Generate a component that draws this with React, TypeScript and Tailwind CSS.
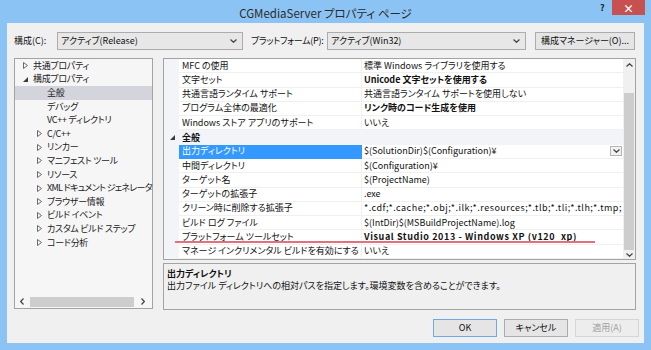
import React from "react";

const TriRight = () => (
  <svg width="5" height="7" viewBox="0 0 5 7">
    <path d="M0.5 0.5 L4.5 3.5 L0.5 6.5 Z" fill="none" stroke="#6a6a6a" strokeWidth="1" />
  </svg>
);
const TriDown = () => (
  <svg width="5" height="5" viewBox="0 0 5 5">
    <path d="M5 0 L5 5 L0 5 Z" fill="#3a3a3a" />
  </svg>
);
const ChevDown = ({ color = "#444" }: { color?: string }) => (
  <svg width="7" height="4" viewBox="0 0 7 4">
    <path d="M0.5 0.5 L3.5 3.3 L6.5 0.5" fill="none" stroke={color} strokeWidth="1.2" />
  </svg>
);
const ChevUp = ({ color = "#444" }: { color?: string }) => (
  <svg width="7" height="4" viewBox="0 0 7 4">
    <path d="M0.5 3.5 L3.5 0.7 L6.5 3.5" fill="none" stroke={color} strokeWidth="1.2" />
  </svg>
);
const ChevLeft = () => (
  <svg width="4" height="7" viewBox="0 0 4 7">
    <path d="M3.5 0.5 L0.7 3.5 L3.5 6.5" fill="none" stroke="#444" strokeWidth="1.2" />
  </svg>
);
const ChevRight = () => (
  <svg width="4" height="7" viewBox="0 0 4 7">
    <path d="M0.5 0.5 L3.3 3.5 L0.5 6.5" fill="none" stroke="#444" strokeWidth="1.2" />
  </svg>
);

type TreeItem = { label: string; level: 1 | 2; icon?: "right" | "down"; selected?: boolean; tight?: boolean };
const tree: TreeItem[] = [
  { label: "共通プロパティ", level: 1, icon: "right" },
  { label: "構成プロパティ", level: 1, icon: "down" },
  { label: "全般", level: 2, selected: true },
  { label: "デバッグ", level: 2 },
  { label: "VC++ ディレクトリ", level: 2 },
  { label: "C/C++", level: 2, icon: "right" },
  { label: "リンカー", level: 2, icon: "right" },
  { label: "マニフェスト ツール", level: 2, icon: "right" },
  { label: "リソース", level: 2, icon: "right" },
  { label: "XML ドキュメント ジェネレータ", level: 2, icon: "right", tight: true },
  { label: "ブラウザー情報", level: 2, icon: "right" },
  { label: "ビルド イベント", level: 2, icon: "right" },
  { label: "カスタム ビルド ステップ", level: 2, icon: "right" },
  { label: "コード分析", level: 2, icon: "right" },
];

type Row = {
  name?: string;
  value?: string;
  bold?: boolean;
  selected?: boolean;
  category?: string;
  wide?: boolean;
};
const rows: Row[] = [
  { name: "MFC の使用", value: "標準 Windows ライブラリを使用する" },
  { name: "文字セット", value: "Unicode 文字セットを使用する", bold: true },
  { name: "共通言語ランタイム サポート", value: "共通言語ランタイム サポートを使用しない" },
  { name: "プログラム全体の最適化", value: "リンク時のコード生成を使用", bold: true },
  { name: "Windows ストア アプリのサポート", value: "いいえ" },
  { category: "全般" },
  { name: "出力ディレクトリ", value: "$(SolutionDir)$(Configuration)¥", selected: true },
  { name: "中間ディレクトリ", value: "$(Configuration)¥" },
  { name: "ターゲット名", value: "$(ProjectName)" },
  { name: "ターゲットの拡張子", value: ".exe" },
  {
    name: "クリーン時に削除する拡張子",
    value: "*.cdf;*.cache;*.obj;*.ilk;*.resources;*.tlb;*.tli;*.tlh;*.tmp;",
    wide: true,
  },
  { name: "ビルド ログ ファイル", value: "$(IntDir)$(MSBuildProjectName).log" },
  {
    name: "プラットフォーム ツールセット",
    value: "Visual Studio 2013 - Windows XP (v120_xp)",
    bold: true,
    wide: true,
  },
  { name: "マネージ インクリメンタル ビルドを有効にする", value: "いいえ" },
];

export default function App() {
  return (
    <div className="relative w-[651px] h-[350px] bg-[#8bc4f4] flex flex-col font-['Noto_Sans_CJK_JP',sans-serif] [font-feature-settings:'palt'] text-[9px] leading-[12px] text-[#111] overflow-hidden">
      {/* title bar */}
      <div className="h-[23px] shrink-0 flex items-center justify-center">
        <span className="text-[11.5px] leading-[16px] text-[#2b2b2b] pt-[3px]">CGMediaServer プロパティ ページ</span>
      </div>
      <div className="absolute top-[2px] left-[600px] text-[9px] font-bold text-[#222]">?</div>
      <div className="absolute top-0 left-[612px] w-[33px] h-[15px] bg-[#c75050] flex items-center justify-center text-white text-[11px] font-bold">
        ×
      </div>

      {/* client */}
      <div className="mx-[7px] mb-[7px] flex-1 bg-[#f0f0f0] flex flex-col">
        {/* toolbar */}
        <div className="mt-[9px] h-[18px] flex items-center pl-[7px]">
          <span className="w-[43px]">構成(C):</span>
          <div className="w-[186px] h-[18px] border border-[#acacac] bg-[#e7e7e7] flex items-center justify-between pl-[3px] pr-[5px]">
            <span>アクティブ(Release)</span>
            <ChevDown />
          </div>
          <span className="ml-[8px] w-[76px] tracking-[-0.3px] whitespace-nowrap">プラットフォーム(P):</span>
          <div className="w-[199px] h-[18px] border border-[#acacac] bg-[#e7e7e7] flex items-center justify-between pl-[3px] pr-[5px]">
            <span>アクティブ(Win32)</span>
            <ChevDown />
          </div>
          <div className="ml-[9px] w-[100px] h-[18px] border border-[#acacac] bg-[#e5e5e5] flex items-center justify-center">
            構成マネージャー(O)...
          </div>
        </div>

        {/* main */}
        <div className="mt-[8px] flex pl-[7px]">
          {/* tree */}
          <div className="w-[139px] h-[251px] border border-[#a3a3a3] bg-[#f6f6f6] flex flex-col text-[#1a1a1a]">
            {tree.map((t, i) => (
              <div
                key={i}
                className={`h-[13.6px] flex items-center whitespace-nowrap ${
                  t.level === 1 ? "pl-[8px]" : "pl-[22px]"
                } ${t.selected ? "bg-[#d3d4dc]" : ""}`}
              >
                <span className="w-[10px] shrink-0 flex items-center">
                  {t.icon === "right" ? <TriRight /> : t.icon === "down" ? <TriDown /> : null}
                </span>
                <span className={t.tight ? "tracking-[-0.7px]" : "tracking-[-0.3px]"}>{t.label}</span>
              </div>
            ))}
            <div className="mt-auto mb-[1px] h-[11px] flex items-center">
              <span className="w-[14px] flex justify-center">
                <ChevLeft />
              </span>
              <div className="ml-[1px] w-[104px] h-[10px] bg-[#cdcdcd]" />
              <span className="flex-1 flex justify-center">
                <ChevRight />
              </span>
            </div>
          </div>

          {/* right column */}
          <div className="ml-[10px] w-[473px] flex flex-col">
            <div className="h-[202px] border border-[#a3a3a3] bg-white flex">
              <div className="flex-1 min-w-0 flex flex-col">
                {rows.map((r, i) =>
                  r.category ? (
                    <div key={i} className="h-[14.3px] flex items-center bg-[#f3f4f7]">
                      <span className="w-[15px] pl-[6px] flex items-center">
                        <TriDown />
                      </span>
                      <span className="pl-[3px] font-bold">{r.category}</span>
                    </div>
                  ) : (
                    <div key={i} className="h-[14.3px] flex">
                      <div className="w-[15px] shrink-0 bg-[#f3f4f7]" />
                      <div
                        className={`w-[183px] shrink-0 flex items-center pl-[3px] whitespace-nowrap border-r border-b ${
                          r.selected ? "bg-[#3399ff] text-white border-[#3399ff]" : "border-[#f0f0f0]"
                        }`}
                      >
                        {r.name}
                      </div>
                      <div
                        className={`flex-1 min-w-0 flex items-center pl-[2px] border-b border-[#f0f0f0] whitespace-nowrap ${
                          r.bold ? "font-bold" : ""
                        }`}
                      >
                        <span
                          className={`flex-1 min-w-0 ${
                            r.wide ? (r.bold ? "tracking-[0.6px]" : "tracking-[0.5px]") : ""
                          }`}
                        >
                          {r.value}
                        </span>
                        {r.selected && (
                          <span className="w-[12px] h-[10px] mr-[1px] border border-[#b5b5b5] bg-[#f2f2f2] flex items-center justify-center shrink-0">
                            <ChevDown />
                          </span>
                        )}
                      </div>
                    </div>
                  )
                )}
              </div>
              {/* vertical scrollbar */}
              <div className="w-[12px] shrink-0 bg-[#f0f0f0] flex flex-col">
                <div className="h-[11px] flex items-center justify-center">
                  <ChevUp />
                </div>
                <div className="h-[23px]" />
                <div className="h-[157px] mx-[1px] bg-[#cdcdcd]" />
                <div className="h-[9px] flex items-center justify-center">
                  <ChevDown />
                </div>
              </div>
            </div>

            {/* description */}
            <div className="mt-[3px] h-[47px] border border-[#a3a3a3] bg-[#f0f0f0] px-[3px] pt-[4px]">
              <div className="font-bold">出力ディレクトリ</div>
              <div>出力ファイル ディレクトリへの相対パスを指定します。環境変数を含めることができます。</div>
            </div>
          </div>
        </div>

        {/* buttons */}
        <div className="mt-[9px] flex justify-end gap-[7px] pr-[5px]">
          <div className="w-[64px] h-[18px] border border-[#6fa8e6] bg-[#e5e5e5] flex items-center justify-center">
            OK
          </div>
          <div className="w-[64px] h-[18px] border border-[#acacac] bg-[#e5e5e5] flex items-center justify-center">
            キャンセル
          </div>
          <div className="w-[64px] h-[18px] border border-[#d5d5d5] bg-[#ededed] flex items-center justify-center text-[#a2a2a2]">
            適用(A)
          </div>
        </div>
      </div>

      {/* annotation underline */}
      <div className="absolute left-[175px] top-[241px] w-[420px] h-[2px] bg-[#e4707c]" />
    </div>
  );
}
